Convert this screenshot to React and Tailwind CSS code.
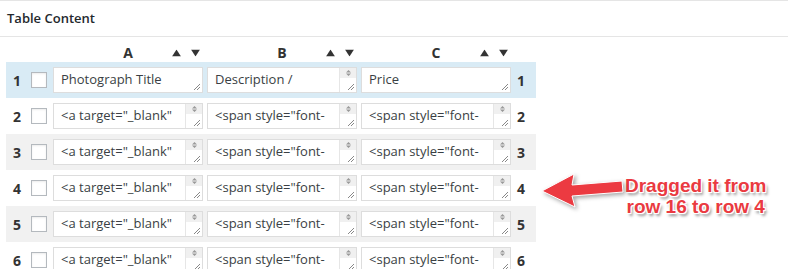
import React from "react";

const font = { fontFamily: "'Open Sans', 'Liberation Sans', sans-serif" };

const rows = [
  { n: 1, cells: ["Photograph Title", "Description /", "Price"], bars: [false, true, false], bg: "bg-[#d9ebf5]" },
  { n: 2, cells: null, bg: "bg-white" },
  { n: 3, cells: null, bg: "bg-[#f1f1f1]" },
  { n: 4, cells: null, bg: "bg-white" },
  { n: 5, cells: null, bg: "bg-[#f1f1f1]" },
  { n: 6, cells: null, bg: "bg-white" },
];

const defaultCells = ['<a target="_blank"', '<span style="font-', '<span style="font-'];

const Grip = () => (
  <svg width="7" height="7" viewBox="0 0 7 7" className="absolute right-[2px] bottom-[2px]">
    <path d="M1 7 L7 1 M4 7 L7 4" stroke="#888" strokeWidth="1" />
  </svg>
);

const SortArrows = () => (
  <div className="flex items-center gap-[10px]">
    <svg width="9" height="7" viewBox="0 0 9 7">
      <path d="M4.5 0 L9 7 L0 7 Z" fill="#333" />
    </svg>
    <svg width="9" height="7" viewBox="0 0 9 7">
      <path d="M0 0 L9 0 L4.5 7 Z" fill="#333" />
    </svg>
  </div>
);

const Cell = ({ text, bar }) => (
  <div className="relative h-[26px] w-[150px] border border-[#dddddd] bg-white flex items-center">
    <span className="pl-[7px] text-[13px] text-[#3a3f44] whitespace-nowrap overflow-hidden">{text}</span>
    {bar ? (
      <div className="absolute right-0 top-0 bottom-0 w-[17px] border-l border-[#e6e6e6] flex flex-col">
        <div className="h-[10px] bg-[#f0f0f0] flex items-center justify-center">
          <svg width="5" height="6" viewBox="0 0 5 6">
            <path d="M2.5 0 L5 2.5 L0 2.5 Z M0 3.5 L5 3.5 L2.5 6 Z" fill="#999" />
          </svg>
        </div>
        <div className="flex-1" />
        <Grip />
      </div>
    ) : (
      <Grip />
    )}
  </div>
);

export default function App() {
  return (
    <div className="relative w-[788px] h-[269px] overflow-hidden bg-white" style={font}>
      <div className="border-t border-[#e5e5e5] h-[37px] border-b flex items-center px-[7px]">
        <span className="text-[13px] font-semibold text-[#23282d]">Table Content</span>
      </div>

      <div className="pl-[6px]">
        <div className="flex h-[25px] items-center pt-[6px]">
          <div className="w-[47px]" />
          {["A", "B", "C"].map((c, i) => (
            <div key={c} className={`relative w-[150px] flex items-center justify-center ${i < 2 ? "mr-[4px]" : ""}`}>
              <span className="text-[14px] font-bold text-[#333]">{c}</span>
              <div className="absolute right-[3px] top-1/2 -translate-y-1/2">
                <SortArrows />
              </div>
            </div>
          ))}
        </div>

        {rows.map((r) => (
          <div key={r.n} className={`flex items-center h-[36px] w-[530px] ${r.bg}`}>
            <div className="w-[47px] flex items-center">
              <span className="w-[22px] text-center text-[14px] font-bold text-[#333]">{r.n}</span>
              <div className="ml-[3px] w-[16px] h-[16px] border border-[#b4b9be] bg-white shadow-[inset_0_1px_2px_rgba(0,0,0,0.08)]" />
            </div>
            <div className="flex gap-[4px]">
              {(r.cells || defaultCells).map((t, i) => (
                <Cell key={i} text={t} bar={r.cells ? r.bars[i] : true} />
              ))}
            </div>
            <span className="ml-[6px] text-[14px] font-bold text-[#333]">{r.n}</span>
          </div>
        ))}
      </div>

      <div className="absolute left-[540px] top-[172px] flex items-start">
        <svg width="86" height="36" viewBox="0 0 86 36" className="drop-shadow-[2px_2px_2px_rgba(0,0,0,0.35)]">
          <path
            d="M2 19 L34 2 L32 13 L82 9 L83 20 L32 24 L35 35 Z"
            fill="#ec3a41"
            stroke="#fff"
            strokeWidth="1"
            strokeLinejoin="round"
          />
        </svg>
        <div
          className="-ml-[1px] mt-[3px] text-[19px] leading-[21px] font-bold text-[#ea3a41] text-center [text-shadow:-1px_-1px_0_#fff,1px_-1px_0_#fff,-1px_1px_0_#fff,1px_1px_0_#fff,0_0_3px_#fff,2px_3px_3px_rgba(0,0,0,0.45)]"
          style={{ fontFamily: "'Liberation Sans', Arial, sans-serif" }}
        >
          <div>Dragged it from</div>
          <div>row 16 to row 4</div>
        </div>
      </div>
    </div>
  );
}
